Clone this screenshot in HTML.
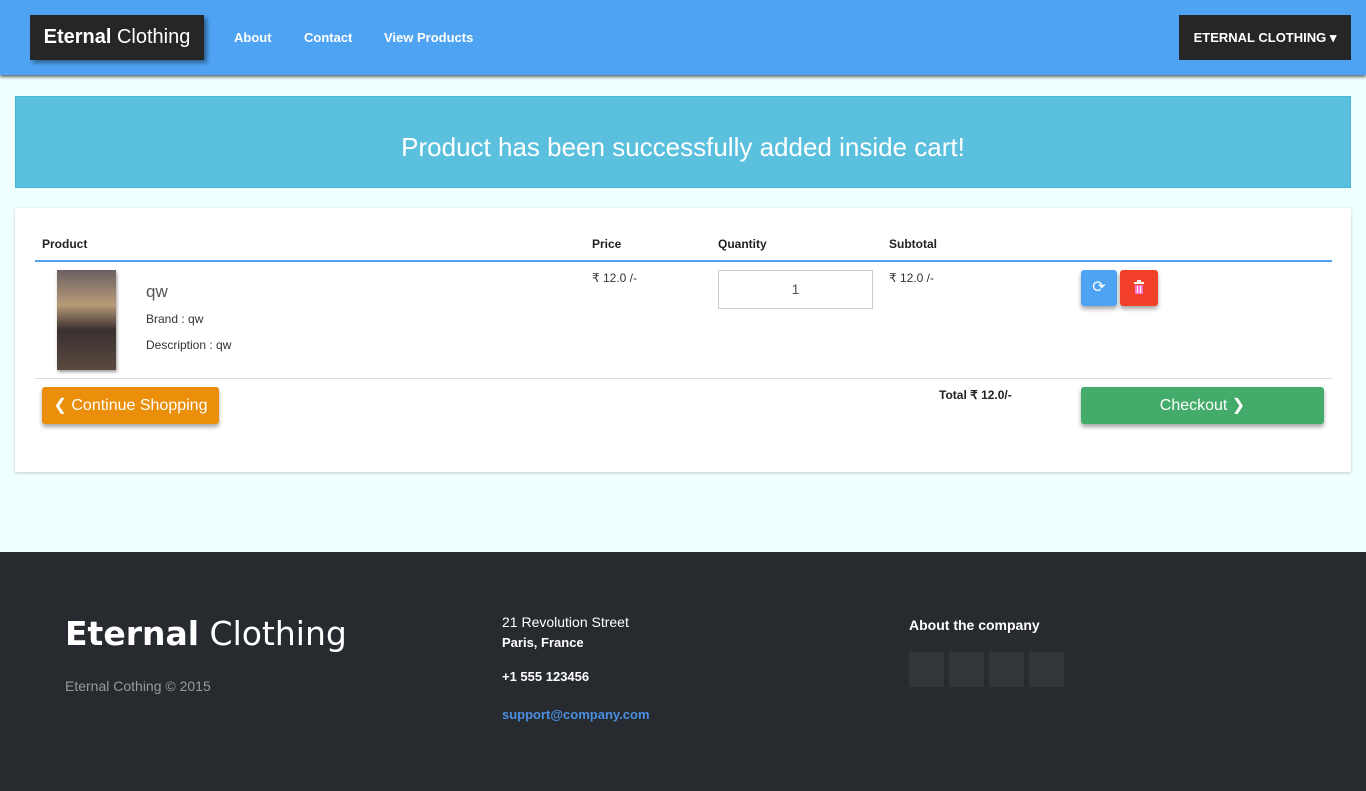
<!DOCTYPE html>
<html><head><meta charset="utf-8"><style>
*{box-sizing:border-box;margin:0;padding:0}
body{width:1366px;height:791px;background:#f0ffff;font-family:"Liberation Sans",sans-serif;position:relative;overflow:hidden}
.nav{position:absolute;left:0;top:0;width:1366px;height:75px;background:#4ea3f2;box-shadow:0 2px 3px rgba(0,0,0,.6)}
.brand{position:absolute;left:30px;top:15px;width:174px;height:45px;background:#262626;color:#fff;font-size:20px;line-height:45px;text-align:center;box-shadow:3px 3px 4px rgba(0,0,0,.4)}
.nl{position:absolute;top:30px;color:#fff;font-weight:bold;font-size:13px}
.dd{position:absolute;left:1179px;top:15px;width:172px;height:45px;background:#262626;color:#fff;font-weight:bold;font-size:13px;line-height:45px;text-align:center}
.alert{position:absolute;left:15px;top:96px;width:1336px;height:92px;background:#5bc0de;border:1px solid #46b8da;color:#fff;font-size:26px;text-align:center;line-height:100px}
.panel{position:absolute;left:15px;top:208px;width:1336px;height:264px;background:#fff;box-shadow:0 1px 3px rgba(0,0,0,.2)}
.th{position:absolute;top:29px;font-size:12px;font-weight:bold;color:#222}
.sm{position:absolute;font-size:12px;color:#333}
.btn{position:absolute;border-radius:3px;color:#fff;box-shadow:0 3px 4px rgba(0,0,0,.35);text-align:center}
.foot{position:absolute;left:0;top:552px;width:1366px;height:239px;background:#272a2f}
.sq{position:absolute;top:100px;width:35px;height:35px;background:#33373c}
</style></head><body>
<div class="nav">
<div class="brand"><b>Eternal</b> <span style="font-weight:300">Clothing</span></div>
<div class="nl" style="left:234px">About</div>
<div class="nl" style="left:304px">Contact</div>
<div class="nl" style="left:384px">View Products</div>
<div class="dd">ETERNAL CLOTHING ▾</div>
</div>
<div class="alert">Product has been successfully added inside cart!</div>
<div class="panel">
<div class="th" style="left:27px">Product</div>
<div class="th" style="left:577px">Price</div>
<div class="th" style="left:703px">Quantity</div>
<div class="th" style="left:874px">Subtotal</div>
<div style="position:absolute;left:20px;top:52px;width:1297px;height:2px;background:#4ea3f2"></div>
<div style="position:absolute;left:42px;top:62px;width:59px;height:100px;background:linear-gradient(#6a6060,#b89a78 35%,#3a3030 60%,#5a4a40);box-shadow:1px 2px 3px rgba(0,0,0,.4)"></div>
<div class="sm" style="left:131px;top:74px;font-size:17px;color:#555">qw</div>
<div class="sm" style="left:131px;top:104px">Brand : qw</div>
<div class="sm" style="left:131px;top:130px">Description : qw</div>
<div class="sm" style="left:577px;top:63px">₹ 12.0 /-</div>
<div style="position:absolute;left:703px;top:62px;width:155px;height:39px;border:1px solid #ccc;text-align:center;line-height:37px;color:#555;font-size:14px">1</div>
<div class="sm" style="left:874px;top:63px">₹ 12.0 /-</div>
<div class="btn" style="left:1066px;top:62px;width:36px;height:36px;background:#4ea3f2;line-height:36px">⟳</div>
<div class="btn" style="left:1105px;top:62px;width:38px;height:36px;background:#f2402a"><svg width="38" height="36"><rect x="14" y="12" width="10" height="2" fill="#fff"/><rect x="17" y="10" width="4" height="2" fill="#fff"/><rect x="15" y="15" width="8" height="9" fill="#f7c"/><rect x="17" y="16" width="1" height="7" fill="#fff"/><rect x="20" y="16" width="1" height="7" fill="#fff"/></svg></div>
<div style="position:absolute;left:20px;top:170px;width:1297px;height:1px;background:#ddd"></div>
<div class="btn" style="left:27px;top:179px;width:177px;height:37px;background:#eb8f0a;line-height:37px;font-size:16px">❮ Continue Shopping</div>
<div class="sm" style="left:924px;top:180px;font-weight:bold;color:#222">Total ₹ 12.0/-</div>
<div class="btn" style="left:1066px;top:179px;width:243px;height:37px;background:#43ac6a;line-height:37px;font-size:16px">Checkout ❯</div>
</div>
<div class="foot">
<div style="position:absolute;left:65px;top:62px;color:#fff;font-size:33px;font-family:'DejaVu Sans',sans-serif"><b>Eternal</b> Clothing</div>
<div style="position:absolute;left:65px;top:126px;color:#999;font-size:14px">Eternal Cothing © 2015</div>
<div style="position:absolute;left:502px;top:62px;color:#fff;font-size:14px">21 Revolution Street</div>
<div style="position:absolute;left:502px;top:83px;color:#fff;font-size:13px;font-weight:bold">Paris, France</div>
<div style="position:absolute;left:502px;top:117px;color:#fff;font-size:13px;font-weight:bold">+1 555 123456</div>
<div style="position:absolute;left:502px;top:155px;color:#4a8fe0;font-size:13px;font-weight:bold">support@company.com</div>
<div style="position:absolute;left:909px;top:65px;color:#fff;font-size:14px;font-weight:bold">About the company</div>
<div class="sq" style="left:909px"></div><div class="sq" style="left:949px"></div><div class="sq" style="left:989px"></div><div class="sq" style="left:1029px"></div>
</div>
</body></html>
